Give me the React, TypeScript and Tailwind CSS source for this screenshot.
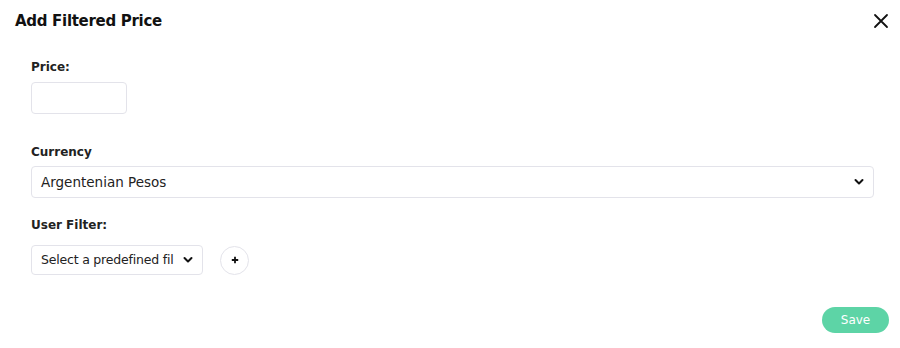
import React from "react";

const Chevron = () => (
  <svg width="10" height="7" viewBox="0 0 10 7" className="pointer-events-none absolute right-[9px] top-1/2 -translate-y-1/2">
    <path d="M1.5 1.5 L5 5 L8.5 1.5" fill="none" stroke="#111" strokeWidth="2" strokeLinecap="round" strokeLinejoin="round" />
  </svg>
);

export default function App() {
  return (
    <div className="w-[900px] h-[348px] bg-white text-[#222] relative" style={{ fontFamily: '"DejaVu Sans", sans-serif' }}>
      <div className="flex items-center justify-between pl-[15px] pr-[11px] pt-[10px]">
        <h1 className="text-[15px] font-bold tracking-[-0.3px] text-[#111] leading-[22px]">Add Filtered Price</h1>
        <svg width="16" height="16" viewBox="0 0 16 16">
          <path d="M2 2 L14 14 M14 2 L2 14" stroke="#111" strokeWidth="1.8" strokeLinecap="round" />
        </svg>
      </div>
      <div className="pl-[31px] pr-[26px] pt-[26px]">
        <div className="text-[12px] font-bold leading-[18px] text-[#222]">Price:</div>
        <input className="mt-[6px] block w-[96px] h-[32px] rounded-[4px] border border-[#e3e3ea] outline-none" />
        <div className="mt-[29px] text-[12px] font-bold leading-[18px] text-[#222]">Currency</div>
        <div className="relative mt-[5px] h-[32px] w-[843px] rounded-[4px] border border-[#e3e3ea] flex items-center pl-[9px] text-[13.5px] text-[#222]">
          Argentenian Pesos
          <Chevron />
        </div>
        <div className="mt-[18px] text-[12px] font-bold leading-[18px] text-[#222]">User Filter:</div>
        <div className="mt-[11px] flex items-center gap-[17px]">
          <div className="relative h-[30px] w-[172px] rounded-[4px] border border-[#e3e3ea] flex items-center pl-[9px] text-[12.5px] tracking-[-0.2px] text-[#222] whitespace-nowrap">
            <span>Select a predefined fil</span>
            <Chevron />
          </div>
          <div className="w-[29px] h-[29px] rounded-full border border-[#e3e3ea] flex items-center justify-center">
            <svg width="8" height="8" viewBox="0 0 8 8">
              <path d="M4 0.8 V7.2 M0.8 4 H7.2" stroke="#111" strokeWidth="1.8" />
            </svg>
          </div>
        </div>
      </div>
      <div className="absolute right-[11px] top-[307px]">
        <button className="w-[67px] h-[26px] rounded-full bg-[#5dd4a6] text-white text-[12px] flex items-center justify-center">Save</button>
      </div>
    </div>
  );
}
